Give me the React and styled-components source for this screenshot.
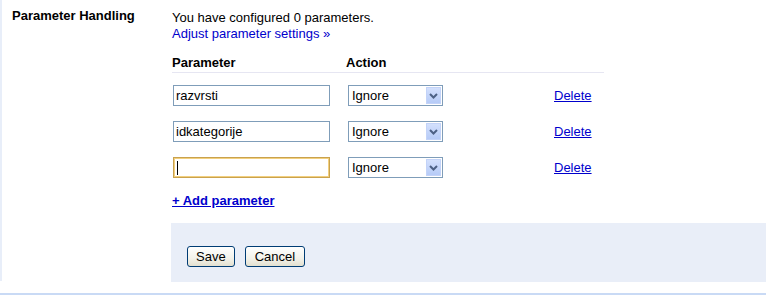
import React from 'react';
import styled, { createGlobalStyle } from 'styled-components';

const GlobalStyle = createGlobalStyle`
  body {
    margin: 0;
    background: #fff;
    font-family: "Liberation Sans", Arial, sans-serif;
    font-size: 13px;
    color: #000;
  }
`;

const Section = styled.div`
  display: flex;
  height: 281px;
  border-left: 2px solid #e8eef9;
`;

const Label = styled.div`
  width: 160px;
  padding: 8px 0 0 10px;
  font-weight: bold;
  line-height: 16px;
`;

const Content = styled.div`
  flex: 1;
  padding-top: 10px;
  line-height: 16px;
`;

const Link = styled.a`
  color: #0000cc;
  text-decoration: ${props => (props.underline ? 'underline' : 'none')};
  font-weight: ${props => (props.bold ? 'bold' : 'normal')};
  cursor: pointer;
`;

const Table = styled.div`
  width: 432px;
  margin-top: 13px;
`;

const HeadRow = styled.div`
  display: grid;
  grid-template-columns: 174px 1fr;
  font-weight: bold;
  padding-bottom: 1px;
  border-bottom: 1px solid #e6e6f2;
`;

const Row = styled.div`
  display: grid;
  grid-template-columns: 175px 205px auto;
  align-items: center;
  height: 21px;
  padding: 12px 0 3px 1px;
`;

const FieldWrap = styled.div`
  position: relative;
  width: 157px;
  height: 21px;
`;

const TextInput = styled.input`
  box-sizing: border-box;
  width: 157px;
  height: 21px;
  margin: 0;
  padding: 0 2px;
  border: 1px solid ${props => (props.focused ? '#c9a24e' : '#7f9db9')};
  box-shadow: ${props => (props.focused ? 'inset 0 0 0 1px #f2cf7e' : 'none')};
  font-family: "Liberation Sans", Arial, sans-serif;
  font-size: 13px;
  color: #000;
  outline: none;
  caret-color: transparent;
`;

const Caret = styled.span`
  position: absolute;
  left: 4px;
  top: 4px;
  width: 1px;
  height: 14px;
  background: #000;
`;

const SelectBox = styled.div`
  box-sizing: border-box;
  display: flex;
  align-items: center;
  width: 95px;
  height: 21px;
  border: 1px solid #7f9db9;
  background: #fff;
`;

const SelectText = styled.span`
  flex: 1;
  padding-left: 3px;
`;

const ArrowButton = styled.span`
  display: flex;
  align-items: center;
  justify-content: center;
  width: 15px;
  height: 17px;
  margin-right: 1px;
  background: linear-gradient(#d3e0fd, #b6cbf7);
  border: 1px solid #c3d3f8;
  box-sizing: border-box;
`;

const DeleteCell = styled.div`
  padding-left: 1px;
`;

const AddLine = styled.div`
  margin-top: 12px;
  line-height: 16px;
`;

const ActionPanel = styled.div`
  display: flex;
  gap: 10px;
  margin-top: 14px;
  margin-left: -1px;
  height: 59px;
  box-sizing: border-box;
  padding: 23px 0 0 16px;
  background: #e9eef8;
`;

const Button = styled.button`
  height: 21px;
  padding: 0 ${props => props.pad}px;
  border: 1px solid #003c74;
  border-radius: 3px;
  background: linear-gradient(#ffffff, #f3f2ea 60%, #e3e0d0);
  font-family: "Liberation Sans", Arial, sans-serif;
  font-size: 13px;
  color: #000;
`;

const Divider = styled.div`
  margin-top: 12px;
  height: 2px;
  background: #c9daf5;
`;

const Chevron = () => (
  <svg width="9" height="6" viewBox="0 0 9 6">
    <path d="M1 1 L4.5 4.5 L8 1" fill="none" stroke="#4d6185" strokeWidth="2" />
  </svg>
);

const ParamRow = ({ value, focused }) => (
  <Row>
    <FieldWrap>
      <TextInput defaultValue={value} focused={focused} />
      {focused && <Caret />}
    </FieldWrap>
    <SelectBox>
      <SelectText>Ignore</SelectText>
      <ArrowButton>
        <Chevron />
      </ArrowButton>
    </SelectBox>
    <DeleteCell>
      <Link underline>Delete</Link>
    </DeleteCell>
  </Row>
);

const params = [
  { value: 'razvrsti' },
  { value: 'idkategorije' },
  { value: '', focused: true },
];

export default function App() {
  return (
    <>
      <GlobalStyle />
      <Section>
        <Label>Parameter Handling</Label>
        <Content>
          <div>You have configured 0 parameters.</div>
          <div>
            <Link>Adjust parameter settings »</Link>
          </div>
          <Table>
            <HeadRow>
              <span>Parameter</span>
              <span>Action</span>
            </HeadRow>
            {params.map((p, i) => (
              <ParamRow key={i} value={p.value} focused={p.focused} />
            ))}
          </Table>
          <AddLine>
            <Link underline bold>+ Add parameter</Link>
          </AddLine>
          <ActionPanel>
            <Button pad={8}>Save</Button>
            <Button pad={9}>Cancel</Button>
          </ActionPanel>
        </Content>
      </Section>
      <Divider />
    </>
  );
}
